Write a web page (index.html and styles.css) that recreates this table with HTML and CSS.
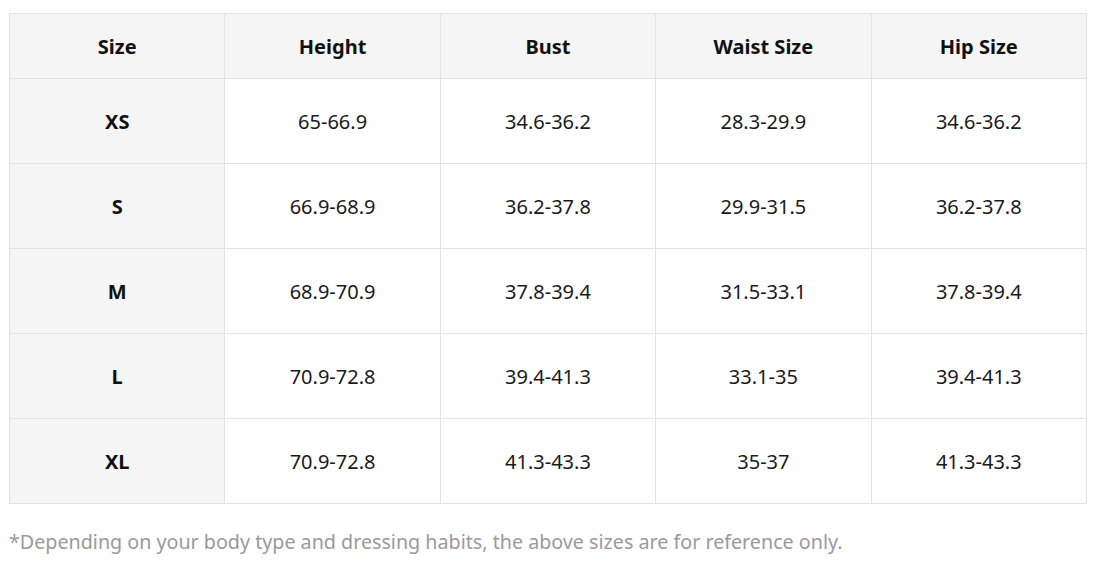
FILE: index.html
```html
<!DOCTYPE html>
<html>
<head>
<meta charset="utf-8">
<link rel="stylesheet" href="styles.css">
</head>
<body>
<div class="wrap">
<table class="size-table">
<thead>
<tr><th>Size</th><th>Height</th><th>Bust</th><th>Waist Size</th><th>Hip Size</th></tr>
</thead>
<tbody>
<tr><th>XS</th><td>65-66.9</td><td>34.6-36.2</td><td>28.3-29.9</td><td>34.6-36.2</td></tr>
<tr><th>S</th><td>66.9-68.9</td><td>36.2-37.8</td><td>29.9-31.5</td><td>36.2-37.8</td></tr>
<tr><th>M</th><td>68.9-70.9</td><td>37.8-39.4</td><td>31.5-33.1</td><td>37.8-39.4</td></tr>
<tr><th>L</th><td>70.9-72.8</td><td>39.4-41.3</td><td>33.1-35</td><td>39.4-41.3</td></tr>
<tr><th>XL</th><td>70.9-72.8</td><td>41.3-43.3</td><td>35-37</td><td>41.3-43.3</td></tr>
</tbody>
</table>
<p class="note">*Depending on your body type and dressing habits, the above sizes are for reference only.</p>
</div>
</body>
</html>
```
FILE: styles.css
```css
html, body { margin: 0; padding: 0; background: #fff; }
body { font-family: "Noto Sans", "Open Sans", sans-serif; color: #111; }
.wrap { padding: 13px 11px 0 9px; }
.size-table {
  width: 1078px;
  border-collapse: collapse;
  table-layout: fixed;
  font-size: 20px;
}
.size-table th, .size-table td {
  border: 1px solid #e3e3e3;
  text-align: center;
  padding: 0;
}
.size-table thead th {
  height: 64px;
  background: #f5f5f5;
  font-weight: 700;
}
.size-table tbody th {
  background: #f5f5f5;
  font-weight: 700;
}
.size-table tbody th, .size-table tbody td { height: 84px; }
.size-table td { font-weight: 400; color: #1a1a1a; }
.note {
  margin: 24px 0 0 0;
  font-size: 19.7px;
  color: #9a9a9a;
}
```
